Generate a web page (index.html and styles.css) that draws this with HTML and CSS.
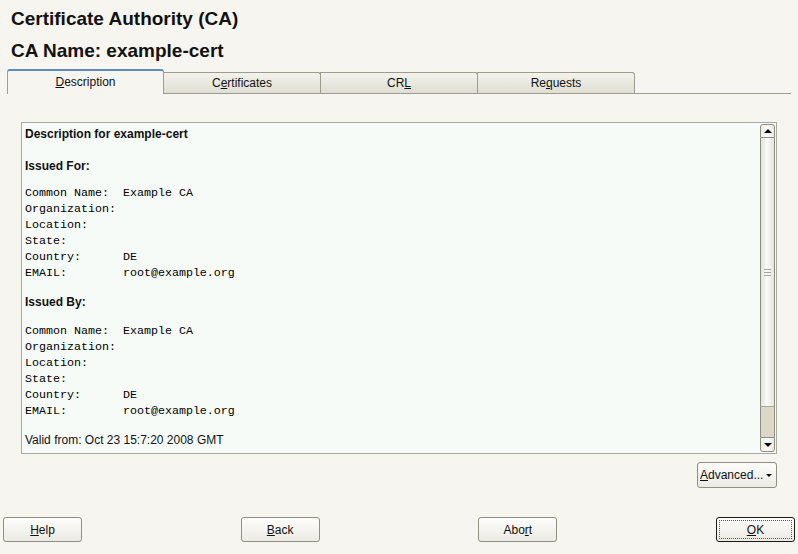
FILE: index.html
```html
<!DOCTYPE html>
<html>
<head>
<meta charset="utf-8">
<title>Certificate Authority (CA)</title>
<link rel="stylesheet" href="styles.css">
</head>
<body>
<div class="dialog">
  <h1 class="title">Certificate Authority (CA)</h1>
  <h2 class="title subtitle">CA Name: example-cert</h2>

  <div class="tabs">
    <div class="tab active"><u>D</u>escription</div>
    <div class="tab">C<u>e</u>rtificates</div>
    <div class="tab">CR<u>L</u></div>
    <div class="tab">Re<u>q</u>uests</div>
  </div>

  <div class="panel">
    <div class="content">
      <p class="bold first">Description for example-cert</p>
      <p class="bold head1">Issued For:</p>
      <pre class="mono block1">Common Name:  Example CA
Organization:
Location:
State:
Country:      DE
EMAIL:        root@example.org</pre>
      <p class="bold after">Issued By:</p>
      <pre class="mono after">Common Name:  Example CA
Organization:
Location:
State:
Country:      DE
EMAIL:        root@example.org</pre>
      <p class="after">Valid from: Oct 23 15:7:20 2008 GMT</p>
    </div>
    <div class="scrollbar">
      <div class="sb-btn up"><span class="arrow-up"></span></div>
      <div class="thumb">
        <div class="grip"><span></span><span></span><span></span></div>
      </div>
      <div class="track"></div>
      <div class="sb-btn down"><span class="arrow-down"></span></div>
    </div>
  </div>

  <div class="adv-row">
    <button class="btn adv"><span><u>A</u>dvanced...</span><span class="caret"></span></button>
  </div>

  <div class="footer">
    <button class="btn"><u>H</u>elp</button>
    <button class="btn"><u>B</u>ack</button>
    <button class="btn">Abo<u>r</u>t</button>
    <button class="btn default"><span class="focus"><u>O</u>K</span></button>
  </div>
</div>
</body>
</html>
```

FILE: styles.css
```css
html, body {
  margin: 0;
  padding: 0;
}

body {
  width: 798px;
  height: 554px;
  overflow: hidden;
  background: #f6f5ef;
  color: #000;
  font-family: "Liberation Sans", Arial, sans-serif;
}

.dialog {
  display: flex;
  flex-direction: column;
}

.title {
  margin: 0;
  padding: 8px 0 0 11px;
  font-size: 19px;
  line-height: 22px;
  font-weight: bold;
  color: #111;
}

.subtitle {
  padding-top: 0;
  margin-top: 10px;
}

/* Tabs */
.tabs {
  display: flex;
  align-items: flex-end;
  margin: 7px 7px 0;
  height: 24px;
  border-bottom: 1px solid #9d9c8f;
}

.tab {
  box-sizing: border-box;
  width: 158px;
  height: 21px;
  margin-left: -1px;
  border: 1px solid #9d9c8f;
  border-bottom: none;
  border-radius: 0 3px 0 0;
  background: linear-gradient(#f3f2ec, #e0ded3);
  font-size: 12px;
  line-height: 20px;
  text-align: center;
  color: #111;
}

.tab.active {
  position: relative;
  z-index: 1;
  width: 157px;
  height: 25px;
  margin-left: 0;
  margin-bottom: -1px;
  border-top: 2px solid #5b8bc1;
  border-radius: 3px 3px 0 0;
  background: #f6f5ef;
  line-height: 22px;
}

/* Content panel */
.panel {
  box-sizing: border-box;
  display: flex;
  height: 332px;
  margin: 28px 21px 0;
  padding: 1px;
  border: 1px solid #a9a89c;
  background: #f7fbf8;
}

.content {
  flex: 1;
  padding-left: 2px;
}

.content p {
  margin: 0;
  font-size: 12px;
  line-height: 16px;
  color: #111;
}

.content .bold {
  font-weight: bold;
}

.content .first {
  margin-top: 2px;
}

.content .head1 {
  margin-top: 16px;
}

.mono {
  margin: 0;
  font-family: "Liberation Mono", "DejaVu Sans Mono", monospace;
  font-size: 11.67px;
  line-height: 16px;
  color: #000;
}

.block1 {
  margin-top: 11px;
}

.content .after {
  margin-top: 13px;
}

/* Scrollbar */
.scrollbar {
  display: flex;
  flex-direction: column;
  width: 15px;
}

.sb-btn {
  box-sizing: border-box;
  height: 15px;
  display: flex;
  align-items: center;
  justify-content: center;
  border: 1px solid #8e8d81;
  background: linear-gradient(90deg, #efeee8, #fbfbf8 50%, #e9e8e1);
}

.sb-btn.up {
  height: 14px;
  border-radius: 3px 3px 0 0;
}

.sb-btn.down {
  border-radius: 0 0 3px 3px;
}

.arrow-up {
  width: 0;
  height: 0;
  border-left: 4px solid transparent;
  border-right: 4px solid transparent;
  border-bottom: 4px solid #000;
}

.arrow-down {
  width: 0;
  height: 0;
  border-left: 4px solid transparent;
  border-right: 4px solid transparent;
  border-top: 4px solid #000;
}

.thumb {
  flex: 1;
  display: flex;
  align-items: center;
  justify-content: center;
  border-left: 1px solid #8e8d81;
  border-right: 1px solid #8e8d81;
  border-bottom: 1px solid #a9a89c;
  background: linear-gradient(90deg, #e3e2da, #fafaf7 45%, #e5e4dc);
}

.grip {
  display: flex;
  flex-direction: column;
  gap: 2px;
}

.grip span {
  display: block;
  width: 7px;
  height: 1px;
  background: #a6a59b;
}

.track {
  height: 30px;
  border-left: 1px solid #8e8d81;
  border-right: 1px solid #8e8d81;
  background: #dcd8c8;
}

/* Buttons */
.btn {
  box-sizing: border-box;
  width: 79px;
  height: 25px;
  padding: 0;
  border: 1px solid #8f8e83;
  border-radius: 3px;
  background: linear-gradient(#fdfdfb, #eceae3);
  font-family: "Liberation Sans", Arial, sans-serif;
  font-size: 12px;
  color: #111;
}

.adv-row {
  display: flex;
  justify-content: flex-end;
  margin: 8px 21px 0;
}

.btn.adv {
  width: 80px;
  height: 26px;
  display: flex;
  align-items: center;
  padding: 0 4px 0 2px;
  justify-content: space-between;
}

.caret {
  width: 0;
  height: 0;
  border-left: 3px solid transparent;
  border-right: 3px solid transparent;
  border-top: 3px solid #000;
}

.footer {
  display: flex;
  justify-content: space-between;
  margin-top: 29px;
  padding: 0 3px;
}

.btn.default {
  border-color: #1a1a1a;
  padding: 2px;
}

.focus {
  box-sizing: border-box;
  display: flex;
  align-items: center;
  justify-content: center;
  width: 100%;
  height: 100%;
  border: 1px dotted #555;
}
```
